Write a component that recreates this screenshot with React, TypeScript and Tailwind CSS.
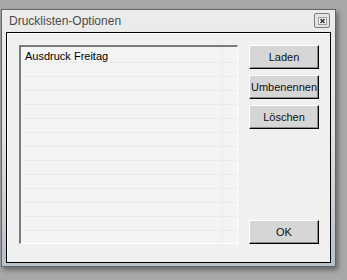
import React from "react";

const font = { fontFamily: '"Liberation Sans", Arial, sans-serif' };

function DlgButton({ label, className = "" }: { label: string; className?: string }) {
  return (
    <button
      className={`h-[24px] w-[70px] border border-t-white border-l-white border-r-black border-b-black bg-[#d6d6d6] text-[11px] text-[#111] shadow-[inset_-1px_-1px_0_#8a8a8a] ${className}`}
    >
      {label}
    </button>
  );
}

export default function App() {
  const rows = Array.from({ length: 14 });
  return (
    <div
      className="h-[280px] w-[347px] overflow-hidden bg-[#a8a8a8] pl-[1px] pt-[9px]"
      style={font}
    >
      {/* Dialogfenster */}
      <div className="flex h-[258px] w-[335px] flex-col border border-[#5f656b] bg-gradient-to-b from-[#ececec] via-[#dfe2e4] to-[#b7bfc7] shadow-[2px_3px_5px_rgba(0,0,0,0.4)]">
        {/* Titelleiste */}
        <div className="flex h-[22px] items-start justify-between pl-[7px] pr-[5px]">
          <span className="mt-[3px] text-[12px] leading-[16px] text-[#4a4a4a]">
            Drucklisten-Optionen
          </span>
          <div className="mt-[3px] flex h-[15px] w-[16px] items-center justify-center rounded-[2px] border border-[#7b7b7b] bg-[#e4e4e4]">
            <svg width="9" height="8" viewBox="0 0 9 8">
              <rect x="0.5" y="0.5" width="8" height="7" fill="#fafafa" stroke="#9a9a9a" />
              <path d="M2.5 2 L6.5 6 M6.5 2 L2.5 6" stroke="#333" strokeWidth="1.6" />
            </svg>
          </div>
        </div>

        {/* Inhalt */}
        <div className="mx-[4px] flex h-[231px] border border-black bg-[#f0f0f0] pl-[12px] pt-[12px] shadow-[inset_1px_1px_0_#ffffff]">
          {/* Liste */}
          <div className="h-[199px] w-[219px] overflow-hidden border-t-2 border-l-2 border-r border-b border-t-[#7a7a7a] border-l-[#7a7a7a] border-r-white border-b-white bg-[#f3f4f3]">
            {rows.map((_, i) => (
              <div
                key={i}
                className={`flex border-b border-[#eaecea] ${i === 0 ? "h-[16px]" : "h-[14px]"}`}
              >
                <div className="w-[201px] pl-[4px] pt-[2px] text-[11px] leading-[14px] text-black">
                  {i === 0 ? "Ausdruck Freitag" : ""}
                </div>
                <div className="flex-1 border-l border-[#eaecea]" />
              </div>
            ))}
          </div>

          {/* Schaltflächen */}
          <div className="ml-[11px] flex h-[199px] flex-col gap-[6px]">
            <DlgButton label="Laden" />
            <DlgButton label="Umbenennen" />
            <DlgButton label="Löschen" />
            <DlgButton label="OK" className="mt-auto" />
          </div>
        </div>
      </div>
    </div>
  );
}
